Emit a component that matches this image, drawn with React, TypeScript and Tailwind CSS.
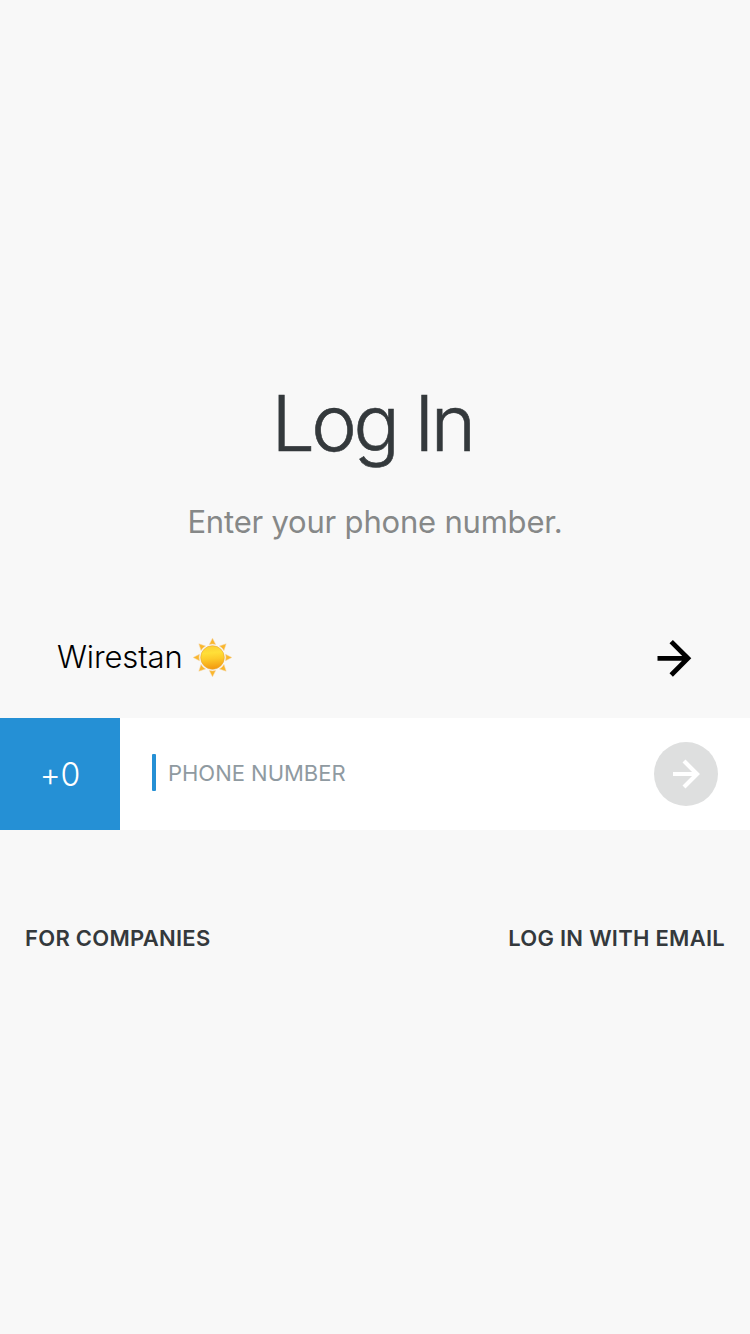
function Sun() {
  return (
    <svg className="mb-0.5 h-[39px] w-[39px]" viewBox="-19 -19 38 38" role="img" aria-label="Sun">
      <defs>
        <linearGradient id="disc" x1="0.45" y1="0" x2="0.55" y2="1">
          <stop offset="0" stopColor="#fbcf35" />
          <stop offset="0.3" stopColor="#ffdf38" />
          <stop offset="0.55" stopColor="#fdcb2a" />
          <stop offset="1" stopColor="#f2960f" />
        </linearGradient>
      </defs>
      {[0, 45, 90, 135, 180, 225, 270, 315].map((angle) => (
        <path
          key={angle}
          d="M0 -18.8L3.1 -12.7Q0 -13.6 -3.1 -12.7Z"
          fill="#fab62b"
          stroke="#f5d4a0"
          strokeWidth="0.5"
          transform={`rotate(${angle})`}
        />
      ))}
      <circle r="11.5" fill="url(#disc)" stroke="#eda72e" strokeWidth="0.6" />
    </svg>
  );
}

export default function App() {
  return (
    <main className="flex h-[1334px] w-[750px] flex-col bg-[#f8f8f8] font-['Inter',sans-serif] whitespace-nowrap">
      <h1 className="mt-[374px] h-[98px] pr-1.5 text-center text-[77px] leading-[98px] font-light tracking-[-3.6px] text-[#34393c] [-webkit-text-stroke:0.6px_#34393c]">
        Log In
      </h1>
      <p className="mt-[30px] h-10 text-center text-[31px] leading-10 tracking-[-0.2px] text-[#868888]">
        Enter your phone number.
      </p>

      <button type="button" className="mt-[56px] flex h-[120px] items-center justify-between pr-[58px] pl-[57px]">
        <span className="flex items-center gap-[11px] text-[31px] leading-10 font-light text-black">
          <span className="mb-0.5 w-[125px] text-left tracking-[-0.12px]">Wirestan</span>
          <Sun />
        </span>
        <svg className="h-[38px] w-[36px]" viewBox="0 0 36 38" fill="none" stroke="#000" strokeWidth="4.8">
          <path d="M1.5 19.3H31M15.2 2.6L31.9 19.3L15.2 36" />
        </svg>
      </button>

      <div className="flex h-28 items-center bg-white pr-8">
        <div className="flex h-28 w-[120px] items-center justify-center bg-[#2590d5] pt-0.5 text-[32px] font-light text-white [font-feature-settings:'calt'_0]">
          <span>+0</span>
        </div>
        <span className="mb-[3px] ml-8 h-[37px] w-1 rounded-[1px] bg-[#2590d5]" />
        <span className="mb-0.5 ml-3 flex-1 text-[22px] leading-8 tracking-[-0.02px] text-[#8f9aa1]">PHONE NUMBER</span>
        <button type="button" aria-label="Continue" className="flex size-16 items-center justify-center rounded-full bg-[#dedfdf]">
          <svg className="size-16" viewBox="0 0 64 64" fill="none" stroke="#fff" strokeWidth="4.2">
            <path d="M19 32H43M30 19L43 32L30 45" />
          </svg>
        </button>
      </div>

      <div className="mt-[92px] flex h-8 items-center justify-between px-[25px] text-[22px] leading-8 font-semibold tracking-[0.27px] text-[#34393c]">
        <button type="button">FOR COMPANIES</button>
        <button type="button">LOG IN WITH EMAIL</button>
      </div>
    </main>
  );
}
